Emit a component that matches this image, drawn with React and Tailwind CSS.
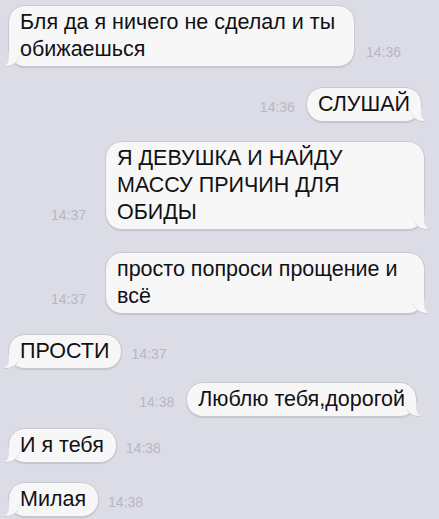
import React from 'react';

const BG = 'bg-[#dcdce7]';

const messages = [
  { side: 'left', lines: ['Бля да я ничего не сделал и ты', 'обижаешься'], time: '14:36', w: 'w-[347px]', mt: 'mt-[5px]', gap: 'gap-[11px]' },
  { side: 'right', lines: ['СЛУШАЙ'], time: '14:36', mt: 'mt-[20px]', pr: 'pr-[17px]', gap: 'gap-[11px]' },
  { side: 'right', lines: ['Я ДЕВУШКА И НАЙДУ', 'МАССУ ПРИЧИН ДЛЯ', 'ОБИДЫ'], time: '14:37', w: 'w-[320px]', mt: 'mt-[19px]', pr: 'pr-[14px]', gap: 'gap-[19px]' },
  { side: 'right', lines: ['просто попроси прощение и', 'всё'], time: '14:37', w: 'w-[320px]', mt: 'mt-[22px]', pr: 'pr-[14px]', gap: 'gap-[19px]' },
  { side: 'left', lines: ['ПРОСТИ'], time: '14:37', mt: 'mt-[20px]', gap: 'gap-[9px]' },
  { side: 'right', lines: ['Люблю тебя,дорогой'], time: '14:38', mt: 'mt-[13px]', pr: 'pr-[22px]', gap: 'gap-[12px]' },
  { side: 'left', lines: ['И я тебя'], time: '14:38', mt: 'mt-[11px]', gap: 'gap-[9px]' },
  { side: 'left', lines: ['Милая'], time: '14:38', mt: 'mt-[19px]', gap: 'gap-[9px]' },
];

const Time = ({ children }) => (
  <span className="text-[14px] leading-none text-[#b7b7c4] pb-[8px] shrink-0">{children}</span>
);

const Bubble = ({ side, lines, w }) => (
  <div
    className={`relative ${w || ''} rounded-[17px] bg-[#f7f7f8] border border-[#c9c9d2] shadow-[0_1px_1px_rgba(0,0,0,0.12)] pt-[3px] pb-[3px] ${side === 'left' ? 'pl-[11px] pr-[12px]' : 'pl-[11px] pr-[11px]'}`}
  >
    {side === 'left' ? (
      <>
        <span className="absolute -bottom-px -left-[7px] w-[18px] h-[14px] bg-[#f7f7f8] border-b border-l border-[#c9c9d2] rounded-br-[14px] rounded-bl-[2px]" />
        <span className={`absolute -bottom-[2px] -left-[12px] w-[12px] h-[16px] ${BG} rounded-br-[10px]`} />
      </>
    ) : (
      <>
        <span className="absolute -bottom-px -right-[7px] w-[18px] h-[14px] bg-[#f7f7f8] border-b border-r border-[#c9c9d2] rounded-bl-[14px] rounded-br-[2px]" />
        <span className={`absolute -bottom-[2px] -right-[12px] w-[12px] h-[16px] ${BG} rounded-bl-[10px]`} />
      </>
    )}
    <div className="relative text-[21.5px] leading-[27px] text-[#111114] whitespace-nowrap">
      {lines.map((l, i) => (
        <div key={i}>{l}</div>
      ))}
    </div>
  </div>
);

export default function App() {
  return (
    <div
      className={`w-[439px] h-[519px] overflow-hidden ${BG} flex flex-col`}
      style={{ fontFamily: '"Liberation Sans", Arial, sans-serif' }}
    >
      {messages.map((m, i) =>
        m.side === 'left' ? (
          <div key={i} className={`flex items-end pl-[8px] ${m.mt} ${m.gap}`}>
            <Bubble {...m} />
            <Time>{m.time}</Time>
          </div>
        ) : (
          <div key={i} className={`flex items-end justify-end ${m.mt} ${m.pr} ${m.gap}`}>
            <Time>{m.time}</Time>
            <Bubble {...m} />
          </div>
        )
      )}
    </div>
  );
}
